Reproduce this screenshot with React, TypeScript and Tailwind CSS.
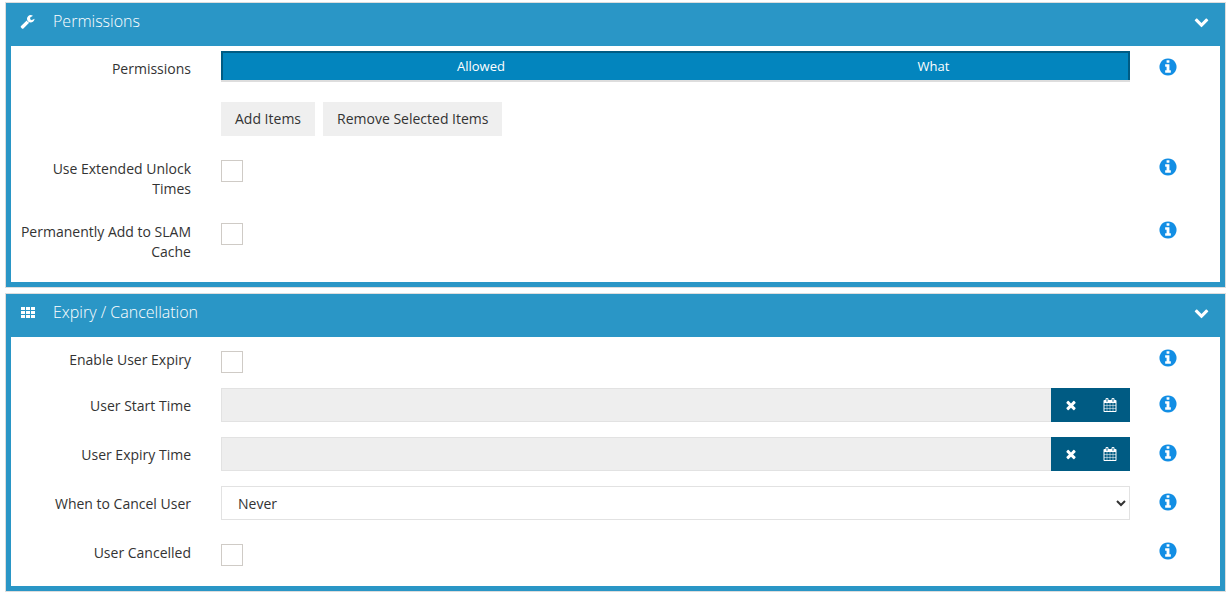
import { useState } from 'react';
import type { ReactNode } from 'react';

interface IconProps {
  className?: string;
}

function WrenchIcon({ className }: IconProps) {
  return (
    <svg viewBox="0 0 1792 1792" fill="currentColor" aria-hidden="true" className={className}>
      <path d="M1092 1052l-682 682q-37 37-90 37-52 0-91-37l-106-108q-38-36-38-90 0-53 38-91l681-681q39 98 114.5 173.5t173.5 114.5zm634-435q0 39-23 106-47 134-164.5 217.5t-258.5 83.5q-185 0-316.5-131.5t-131.5-316.5 131.5-316.5 316.5-131.5q58 0 121.5 16.5t107.5 46.5q16 11 16 28t-16 28l-293 169v224l193 107q5-3 79-48.5t135.5-81 70.5-35.5q15 0 23.5 10t8.5 25z" />
    </svg>
  );
}

function GridIcon({ className }: IconProps) {
  return (
    <svg viewBox="0 0 15 15" fill="currentColor" aria-hidden="true" className={className}>
      {[2, 6, 10].map((y) =>
        [1, 6, 11].map((x) => <rect key={`${x}-${y}`} x={x} y={y} width="4" height="3" />)
      )}
    </svg>
  );
}

function ChevronIcon({ className }: IconProps) {
  return (
    <svg viewBox="0 0 1792 1792" fill="currentColor" aria-hidden="true" className={className}>
      <path d="M1683 808l-742 741q-19 19-45 19t-45-19l-742-741q-19-19-19-45.5t19-45.5l166-165q19-19 45-19t45 19l531 531 531-531q19-19 45-19t45 19l166 165q19 19 19 45.5t-19 45.5z" />
    </svg>
  );
}

function InfoIcon({ className }: IconProps) {
  return (
    <svg viewBox="0 0 1792 1792" fill="currentColor" aria-hidden="true" className={className}>
      <path d="M1152 1376v-160q0-14-9-23t-23-9h-96v-512q0-14-9-23t-23-9h-320q-14 0-23 9t-9 23v160q0 14 9 23t23 9h96v320h-96q-14 0-23 9t-9 23v160q0 14 9 23t23 9h448q14 0 23-9t9-23zm-128-896v-160q0-14-9-23t-23-9h-192q-14 0-23 9t-9 23v160q0 14 9 23t23 9h192q14 0 23-9t9-23zm640 416q0 209-103 385.5t-279.5 279.5-385.5 103-385.5-103-279.5-279.5-103-385.5 103-385.5 279.5-279.5 385.5-103 385.5 103 279.5 279.5 103 385.5z" />
    </svg>
  );
}

function TimesIcon({ className }: IconProps) {
  return (
    <svg viewBox="0 0 1792 1792" fill="currentColor" aria-hidden="true" className={className}>
      <path d="M1490 1322q0 40-28 68l-136 136q-28 28-68 28t-68-28l-294-294-294 294q-28 28-68 28t-68-28l-136-136q-28-28-28-68t28-68l294-294-294-294q-28-28-28-68t28-68l136-136q28-28 68-28t68 28l294 294 294-294q28-28 68-28t68 28l136 136q28 28 28 68t-28 68l-294 294 294 294q28 28 28 68z" />
    </svg>
  );
}

function CalendarIcon({ className }: IconProps) {
  return (
    <svg viewBox="0 0 1792 1792" fill="currentColor" aria-hidden="true" className={className}>
      <path d="M192 1664h288v-288h-288v288zm352 0h320v-288h-320v288zm-352-352h288v-320h-288v320zm352 0h320v-320h-320v320zm-352-384h288v-288h-288v288zm736 736h320v-288h-320v288zm-384-736h320v-288h-320v288zm768 736h288v-288h-288v288zm-384-352h320v-320h-320v320zm-352-864v-288q0-13-9.5-22.5t-22.5-9.5h-64q-13 0-22.5 9.5t-9.5 22.5v288q0 13 9.5 22.5t22.5 9.5h64q13 0 22.5-9.5t9.5-22.5zm736 864h288v-320h-288v320zm-384-384h320v-288h-320v288zm384 0h288v-288h-288v288zm32-480v-288q0-13-9.5-22.5t-22.5-9.5h-64q-13 0-22.5 9.5t-9.5 22.5v288q0 13 9.5 22.5t22.5 9.5h64q13 0 22.5-9.5t9.5-22.5zm384-64v1280q0 52-38 90t-90 38h-1408q-52 0-90-38t-38-90v-1280q0-52 38-90t90-38h128v-96q0-66 47-113t113-47h64q66 0 113 47t47 113v96h384v-96q0-66 47-113t113-47h64q66 0 113 47t47 113v96h128q52 0 90 38t38 90z" />
    </svg>
  );
}

interface PanelProps {
  title: string;
  icon: ReactNode;
  children: ReactNode;
}

function Panel({ title, icon, children }: PanelProps) {
  const [open, setOpen] = useState(true);

  return (
    <section className="border border-[#ddd] bg-[#2a96c6]">
      <header className="flex h-[43px] items-center pb-1.5 pl-3.5 pr-4 text-white">
        {icon}
        <h2 className="ml-[18px] flex-1 pb-0.5 text-base font-light">{title}</h2>
        <button type="button" aria-label={`Toggle ${title}`} aria-expanded={open} onClick={() => setOpen(!open)}>
          <ChevronIcon className="size-[15px]" />
        </button>
      </header>
      {open && <div className="mx-[5px] mb-[5px] bg-white py-[5px]">{children}</div>}
    </section>
  );
}

interface FieldProps {
  label: string;
  htmlFor?: string;
  children: ReactNode;
}

function Field({ label, htmlFor, children }: FieldProps) {
  return (
    <div className="mb-[15px] flex items-start">
      {htmlFor ? (
        <label htmlFor={htmlFor} className="w-[180px] shrink-0 pl-2 pt-2 text-right">
          {label}
        </label>
      ) : (
        <div className="w-[180px] shrink-0 pl-2 pt-2 text-right">{label}</div>
      )}
      <div className="ml-[30px] min-w-0 flex-1">{children}</div>
      <div className="w-[90px] shrink-0 pl-7 pt-1.5">
        <button type="button" aria-label={`About ${label}`} className="block text-[#128ee4]">
          <InfoIcon className="size-5" />
        </button>
      </div>
    </div>
  );
}

function CheckField({ id, label }: { id: string; label: string }) {
  return (
    <Field label={label} htmlFor={id}>
      <input
        id={id}
        type="checkbox"
        className="mt-[9px] block size-[22px] appearance-none border border-[#cfcbc6] bg-white checked:bg-[#0385be]"
      />
    </Field>
  );
}

function DateField({ id, label }: { id: string; label: string }) {
  const [value, setValue] = useState('');

  return (
    <Field label={label} htmlFor={id}>
      <div className="flex h-[34px]">
        <input
          id={id}
          type="text"
          readOnly
          value={value}
          className="min-w-0 flex-1 border border-r-0 border-[#e2e2e2] bg-[#eee] px-3"
        />
        <div className="flex bg-[#005b83] pr-px text-white">
          <button
            type="button"
            aria-label={`Clear ${label}`}
            onClick={() => setValue('')}
            className="flex w-[39px] items-center justify-center"
          >
            <TimesIcon className="size-3.5" />
          </button>
          <button type="button" aria-label={`Pick ${label}`} className="flex w-[39px] items-center justify-center">
            <CalendarIcon className="size-3.5" />
          </button>
        </div>
      </div>
    </Field>
  );
}

export default function App() {
  return (
    <main className="flex flex-col gap-[5px] bg-white pb-[3px] pl-[5px] pr-1 pt-0.5 font-['Open_Sans',sans-serif] text-sm/5 text-[#333]">
      <Panel title="Permissions" icon={<WrenchIcon className="size-[15px]" />}>
        <Field label="Permissions">
          <table className="w-full border-collapse">
            <thead>
              <tr className="h-[29px] bg-[#0385be] text-[13px]/5 text-white">
                <th className="w-[57%] border-2 border-r-0 border-[#005b83] border-b-[#ddd] p-0 pb-0.5 font-normal">
                  Allowed
                </th>
                <th className="border-2 border-l-0 border-[#005b83] border-b-[#ddd] p-0 pb-0.5 font-normal">What</th>
              </tr>
            </thead>
          </table>
          <div className="mt-5 flex gap-2">
            <button type="button" className="h-[34px] bg-[#efefef] px-3.5">
              Add Items
            </button>
            <button type="button" className="h-[34px] bg-[#efefef] px-3.5">
              Remove Selected Items
            </button>
          </div>
        </Field>
        <CheckField id="extended-unlock" label="Use Extended Unlock Times" />
        <CheckField id="slam-cache" label="Permanently Add to SLAM Cache" />
      </Panel>

      <Panel title="Expiry / Cancellation" icon={<GridIcon className="size-[15px]" />}>
        <CheckField id="enable-expiry" label="Enable User Expiry" />
        <DateField id="start-time" label="User Start Time" />
        <DateField id="expiry-time" label="User Expiry Time" />
        <Field label="When to Cancel User" htmlFor="cancel-when">
          <select id="cancel-when" className="block h-[34px] w-full border border-[#e2e2e2] bg-white px-3">
            <option>Never</option>
          </select>
        </Field>
        <CheckField id="user-cancelled" label="User Cancelled" />
      </Panel>
    </main>
  );
}
